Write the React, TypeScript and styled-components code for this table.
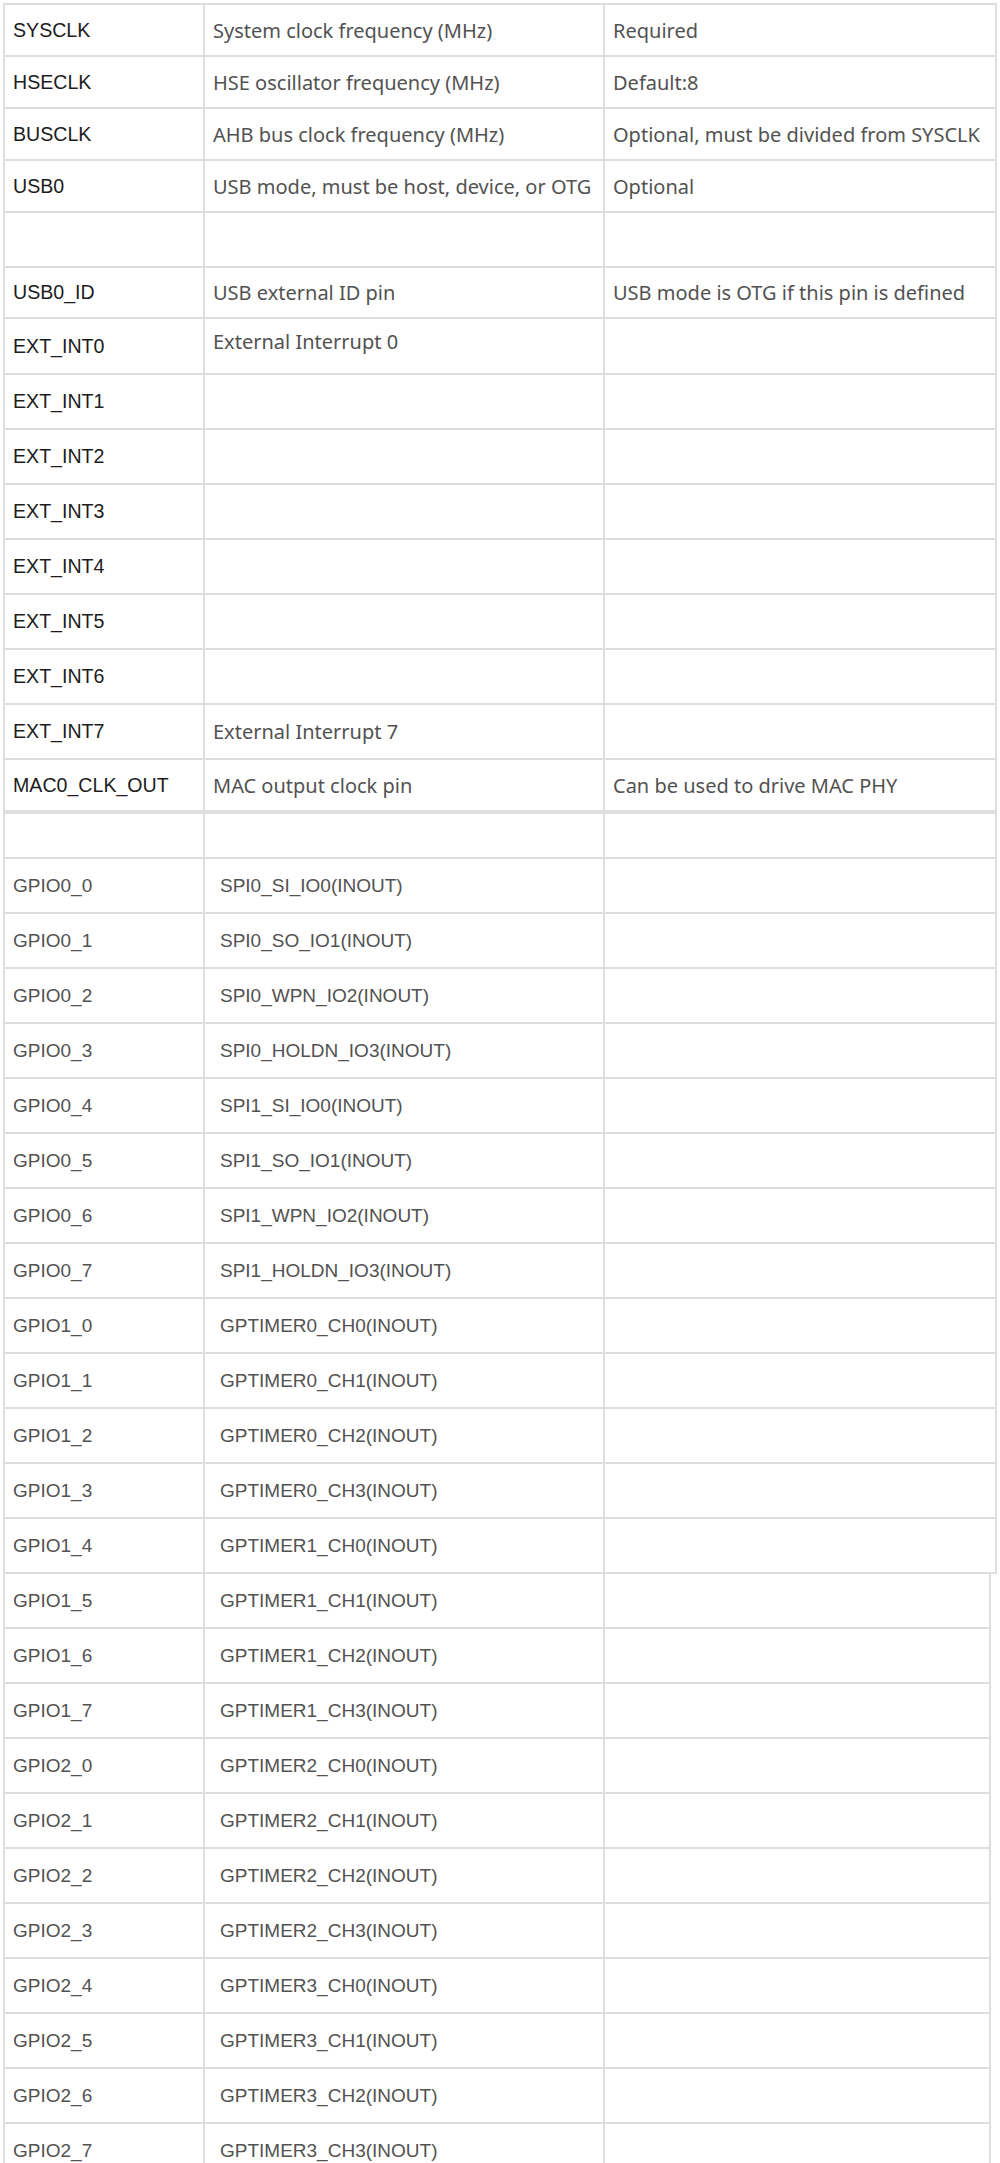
import React from "react";
import styled, { createGlobalStyle } from "styled-components";

type Row = [string, string, string, number];

const GlobalStyle = createGlobalStyle`
  html, body {
    margin: 0;
    padding: 0;
    background: #ffffff;
  }
  body {
    font-family: "Liberation Sans", Arial, sans-serif;
  }
`;

const Page = styled.div`
  display: flex;
  flex-direction: column;
  padding: 3px 0 0 3px;
  width: 1000px;
  box-sizing: border-box;
`;

const Table = styled.div<{ $width: number; $open?: boolean }>`
  display: flex;
  flex-direction: column;
  gap: 2px;
  width: ${({ $width }) => $width}px;
  box-sizing: border-box;
  background: #dedede;
  padding: ${({ $open }) => ($open ? "0 2px 2px" : "2px")};
`;

const TableRow = styled.div<{ $height: number }>`
  display: grid;
  grid-template-columns: 198px 398px 1fr;
  gap: 2px;
  height: ${({ $height }) => $height}px;
`;

const Cell = styled.div<{ $kind: "name" | "text" | "pin" | "func"; $lift?: boolean }>`
  background: #ffffff;
  display: flex;
  align-items: center;
  white-space: nowrap;
  overflow: hidden;
  box-sizing: border-box;
  padding: ${({ $kind, $lift }) =>
    $kind === "func" ? "0 0 0 15px" : $lift ? "0 0 10px 8px" : "0 0 0 8px"};
  font-family: ${({ $kind }) =>
    $kind === "text" ? '"Noto Sans", "Liberation Sans", sans-serif' : '"Liberation Sans", Arial, sans-serif'};
  font-size: ${({ $kind }) => ($kind === "text" ? "20px" : $kind === "name" ? "19.6px" : "19px")};
  color: ${({ $kind }) => ($kind === "name" ? "#1c1c1c" : "#525252")};
`;

const config: Row[] = [
  ["SYSCLK", "System clock frequency (MHz)", "Required", 50],
  ["HSECLK", "HSE oscillator frequency (MHz)", "Default:8", 50],
  ["BUSCLK", "AHB bus clock frequency (MHz)", "Optional, must be divided from SYSCLK", 50],
  ["USB0", "USB mode, must be host, device, or OTG", "Optional", 50],
  ["", "", "", 53],
  ["USB0_ID", "USB external ID pin", "USB mode is OTG if this pin is defined", 49],
  ["EXT_INT0", "External Interrupt 0", "", 54],
  ["EXT_INT1", "", "", 53],
  ["EXT_INT2", "", "", 53],
  ["EXT_INT3", "", "", 53],
  ["EXT_INT4", "", "", 53],
  ["EXT_INT5", "", "", 53],
  ["EXT_INT6", "", "", 53],
  ["EXT_INT7", "External Interrupt 7", "", 53],
  ["MAC0_CLK_OUT", "MAC output clock pin", "Can be used to drive MAC PHY", 50],
];

const spi = ["SPI0_SI_IO0", "SPI0_SO_IO1", "SPI0_WPN_IO2", "SPI0_HOLDN_IO3", "SPI1_SI_IO0", "SPI1_SO_IO1", "SPI1_WPN_IO2", "SPI1_HOLDN_IO3"];

const gpio: [string, string][] = [];
spi.forEach((f, i) => gpio.push([`GPIO0_${i}`, `${f}(INOUT)`]));
for (let t = 0; t < 4; t++) {
  for (let ch = 0; ch < 4; ch++) {
    const n = t * 4 + ch;
    gpio.push([`GPIO${1 + Math.floor(n / 8)}_${n % 8}`, `GPTIMER${t}_CH${ch}(INOUT)`]);
  }
}

const upperPins = gpio.slice(0, 13);
const lowerPins = gpio.slice(13);

const App: React.FC = () => {
  return (
    <>
      <GlobalStyle />
      <Page>
        <Table $width={994}>
          {config.map(([name, desc, note, h], i) => (
            <TableRow key={i} $height={h}>
              <Cell $kind="name">{name}</Cell>
              <Cell $kind="text" $lift={name === "EXT_INT0"}>{desc}</Cell>
              <Cell $kind="text">{note}</Cell>
            </TableRow>
          ))}
        </Table>
        <Table $width={994}>
          <TableRow $height={43}>
            <Cell $kind="pin" />
            <Cell $kind="func" />
            <Cell $kind="pin" />
          </TableRow>
          {upperPins.map(([pin, func]) => (
            <TableRow key={pin} $height={53}>
              <Cell $kind="pin">{pin}</Cell>
              <Cell $kind="func">{func}</Cell>
              <Cell $kind="pin" />
            </TableRow>
          ))}
        </Table>
        <Table $width={988} $open>
          {lowerPins.map(([pin, func]) => (
            <TableRow key={pin} $height={53}>
              <Cell $kind="pin">{pin}</Cell>
              <Cell $kind="func">{func}</Cell>
              <Cell $kind="pin" />
            </TableRow>
          ))}
        </Table>
      </Page>
    </>
  );
};

export default App;
